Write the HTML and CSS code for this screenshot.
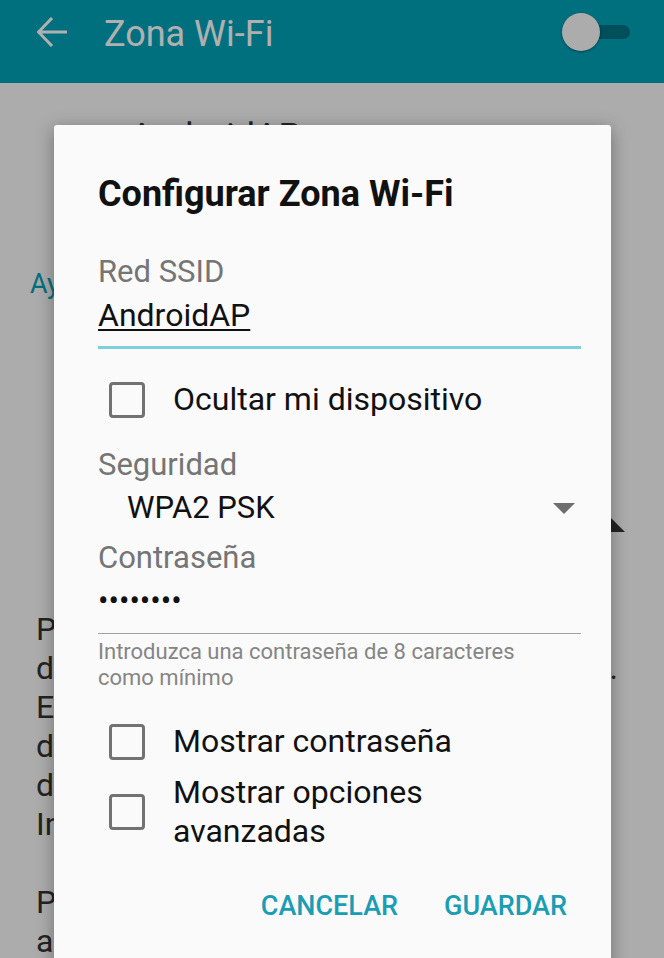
FILE: index.html
```html
<!DOCTYPE html>
<html lang="es">
<head>
  <meta charset="UTF-8" />
  <meta name="viewport" content="width=device-width, initial-scale=1.0" />
  <title>Zona Wi-Fi</title>
  <link rel="stylesheet" href="styles.css">
</head>
<body>
  <div class="screen">
    <header class="appbar">
      <svg class="back" viewBox="0 0 30 30" fill="none" stroke-width="3"><path d="M30 15H2M15 1 1.5 15 15 29"/></svg>
      <h1>Zona Wi-Fi</h1>
      <div class="switch"><span class="track"></span><span class="thumb"></span></div>
    </header>

    <main class="page">
      <div class="ap-name">AndroidAP</div>
      <a class="help">Ayuda</a>
      <div class="spinner-row"><span class="corner"></span></div>
      <p class="desc">
        <span>Permite que otros</span>
        <span class="full">dispositivos se conecten a esta red.</span>
        <span>El uso de la Zona Wi-Fi</span>
        <span>de su dispositivo puede</span>
        <span>de forma adicional generar</span>
        <span>Información adicional</span>
      </p>
      <p class="desc">
        <span>Para compartir datos</span>
        <span>active la Zona Wi-Fi</span>
      </p>
    </main>

    <div class="scrim"></div>

    <section class="dialog">
      <h2>Configurar Zona Wi-Fi</h2>

      <div class="label">Red SSID</div>
      <div class="field active"><span class="value">AndroidAP</span></div>

      <label class="check first"><span class="box"></span>Ocultar mi dispositivo</label>

      <div class="label">Seguridad</div>
      <div class="spinner">
        <span>WPA2 PSK</span>
        <span class="caret"></span>
      </div>

      <div class="label pass-label">Contraseña</div>
      <div class="field password">••••••••</div>
      <div class="hint">Introduzca una contraseña de 8 caracteres<br>como mínimo</div>

      <label class="check second"><span class="box"></span>Mostrar contraseña</label>
      <label class="check third"><span class="box"></span>Mostrar opciones<br>avanzadas</label>

      <div class="actions">
        <button>CANCELAR</button>
        <button>GUARDAR</button>
      </div>
    </section>
  </div>
</body>
</html>
```

FILE: styles.css
```css
:root {
  --teal: #00a2b8;
  --accent: #1b9db4;
  --label: #757575;
  --text: #111;
}
body {
  margin: 0;
  font-family: Roboto, 'Noto Sans', sans-serif;
  background: #fafafa;
}
.screen {
  position: relative;
  width: 664px;
  height: 958px;
  overflow: hidden;
  background: #fafafa;
}

/* app bar behind the dialog */
.appbar {
  display: flex;
  align-items: center;
  height: 64px;
  padding-bottom: 19px;
  background: var(--teal);
  color: #fff;
}
.back {
  width: 30px;
  height: 30px;
  margin-left: 37px;
  stroke: #fff;
}
.appbar h1 {
  margin: 4px 0 0 37px;
  font-size: 36px;
  font-weight: 400;
  line-height: 40px;
  flex: 1;
}
.switch {
  position: relative;
  width: 68px;
  height: 38px;
  margin-right: 34px;
}
.track {
  position: absolute;
  right: 0;
  top: 12px;
  width: 44px;
  height: 14px;
  border-radius: 7px;
  background: #007384;
}
.thumb {
  position: absolute;
  left: 0;
  top: 0;
  width: 38px;
  height: 38px;
  border-radius: 50%;
  background: #fafafa;
  box-shadow: 0 1px 3px rgba(0, 0, 0, 0.4);
}

.page {
  color: #333;
}
.ap-name {
  margin: 32px 0 0 130px;
  font-size: 36px;
  line-height: 44px;
}
.help {
  display: block;
  margin: 108px 0 0 30px;
  font-size: 27px;
  line-height: 34px;
  color: var(--teal);
}
.spinner-row {
  position: relative;
  height: 40px;
  margin-top: 196px;
}
.corner {
  position: absolute;
  left: 600px;
  top: 10px;
  width: 0;
  height: 0;
  border-left: 25px solid #333;
  border-top: 25px solid transparent;
}
.desc {
  margin: 73px 50px 0 36px;
  font-size: 32px;
  line-height: 39px;
}
.desc + .desc {
  margin-top: 39px;
}
.desc span {
  display: block;
  white-space: nowrap;
}
.desc .full {
  width: 582px;
  text-align: justify;
  text-align-last: justify;
}

.scrim {
  position: absolute;
  inset: 0;
  background: rgba(0, 0, 0, 0.31);
}

/* dialog */
.dialog {
  position: absolute;
  left: 54px;
  top: 125px;
  width: 483px;
  height: 860px;
  padding: 47px 30px 0 44px;
  background: #fafafa;
  border-radius: 3px;
  box-shadow: 0 4px 18px rgba(0, 0, 0, 0.35);
  color: var(--text);
}
.dialog h2 {
  margin: 0;
  font-size: 36px;
  font-weight: 700;
  line-height: 44px;
}
.label {
  margin-top: 37px;
  font-size: 31px;
  line-height: 38px;
  color: var(--label);
}
.field {
  margin-top: 5px;
  padding-bottom: 12px;
  font-size: 32px;
  line-height: 38px;
  border-bottom: 3px solid #7fcfdc;
}
.value {
  text-decoration: underline;
  text-decoration-thickness: 2px;
  text-underline-offset: 3px;
}
.check {
  display: flex;
  align-items: center;
  gap: 28px;
  padding-left: 11px;
  font-size: 32px;
  line-height: 39px;
}
.check.first { margin-top: 31px; }
.check.second { margin-top: 31px; }
.check.third { margin-top: 12px; }
.box {
  flex: none;
  width: 36px;
  height: 36px;
  box-sizing: border-box;
  border: 3px solid #727272;
  border-radius: 4px;
}
.check.first + .label {
  margin-top: 27px;
}
.spinner {
  display: flex;
  align-items: center;
  justify-content: space-between;
  margin-top: 5px;
  padding: 0 6px 0 29px;
  font-size: 31px;
  line-height: 38px;
}
.caret {
  width: 0;
  height: 0;
  border-left: 11px solid transparent;
  border-right: 11px solid transparent;
  border-top: 11px solid #6e6e6e;
}
.label.pass-label {
  margin-top: 12px;
}
.password {
  margin-top: 5px;
  padding-bottom: 13px;
  font-size: 31px;
  border-bottom: 1px solid #a0a0a0;
}
.hint {
  margin-top: 5px;
  font-size: 22px;
  line-height: 26px;
  color: #858585;
}
.actions {
  display: flex;
  justify-content: flex-end;
  gap: 18px;
  margin-top: 38px;
}
.actions button {
  padding: 0 14px;
  border: none;
  background: none;
  font-family: Roboto, sans-serif;
  font-size: 27px;
  font-weight: 500;
  line-height: 34px;
  color: var(--accent);
}
```
